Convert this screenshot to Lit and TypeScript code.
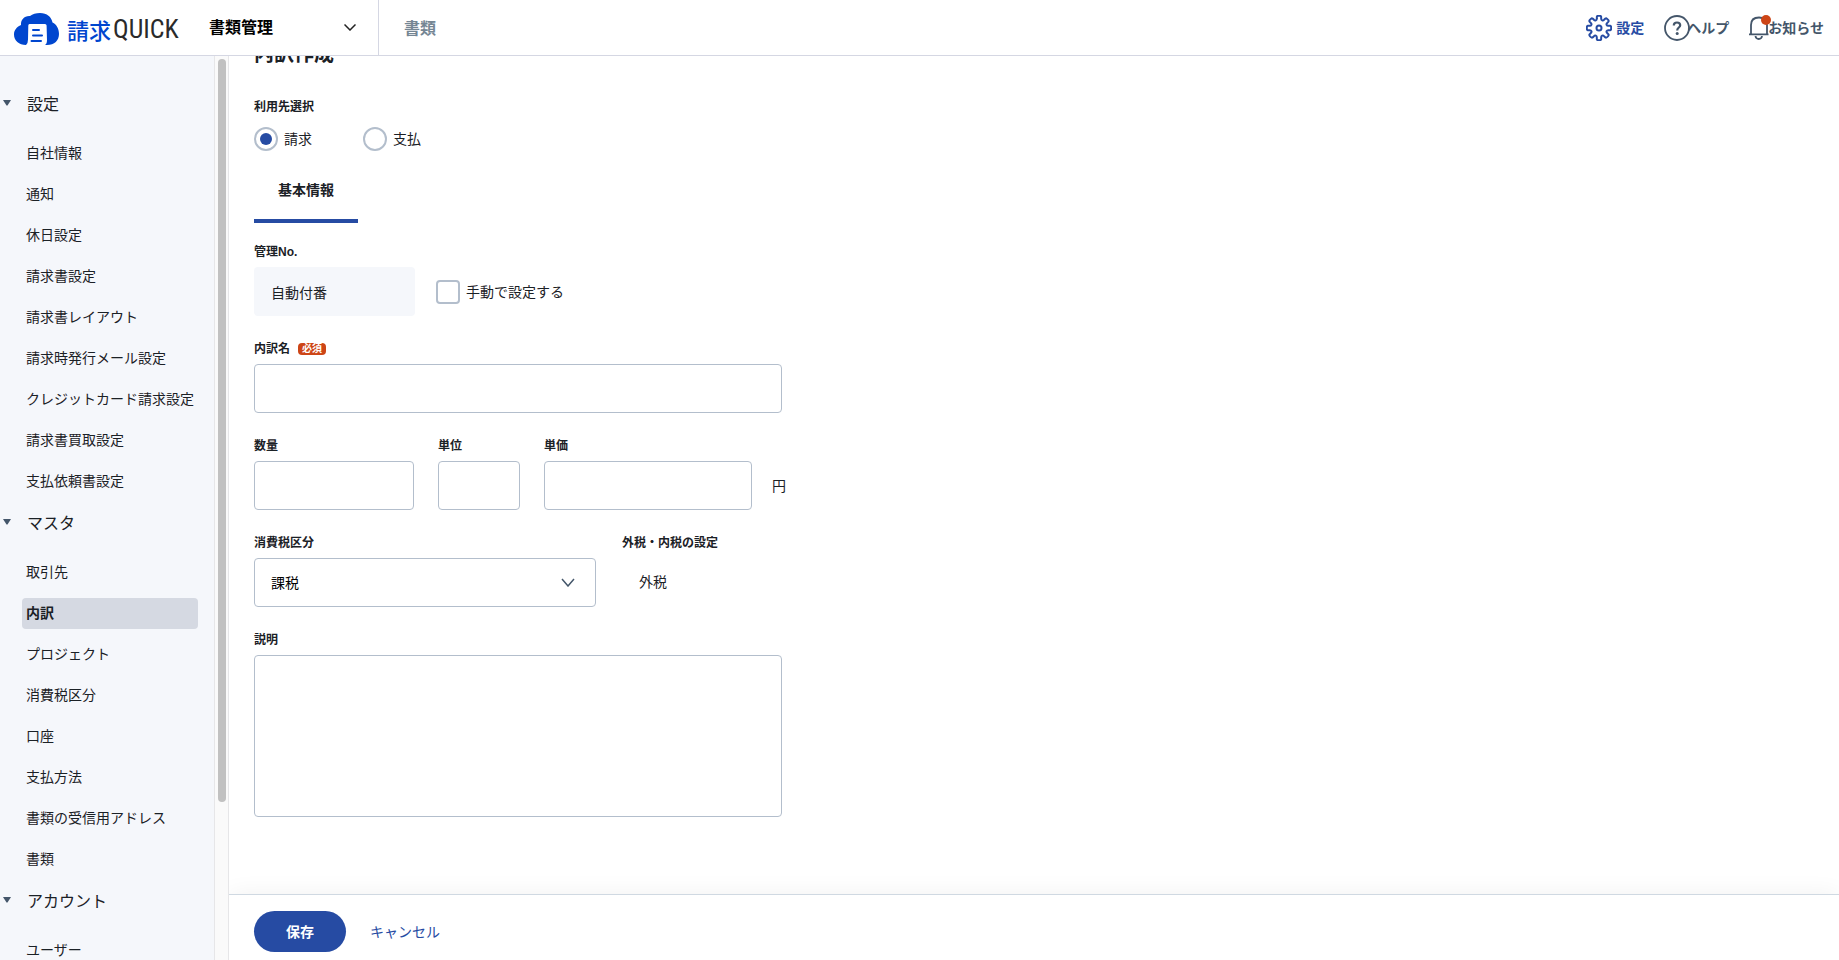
import { LitElement, html, css, svg } from "lit";
import { customElement, state } from "lit/decorators.js";

interface Section {
  title: string;
  items: string[];
}

const SECTIONS: Section[] = [
  {
    title: "設定",
    items: [
      "自社情報",
      "通知",
      "休日設定",
      "請求書設定",
      "請求書レイアウト",
      "請求時発行メール設定",
      "クレジットカード請求設定",
      "請求書買取設定",
      "支払依頼書設定",
    ],
  },
  {
    title: "マスタ",
    items: [
      "取引先",
      "内訳",
      "プロジェクト",
      "消費税区分",
      "口座",
      "支払方法",
      "書類の受信用アドレス",
      "書類",
    ],
  },
  { title: "アカウント", items: ["ユーザー"] },
];

/** Outline of an eight-toothed cog centred on (13, 13). */
function cogPath(): string {
  const pts: string[] = [];
  const step = Math.PI / 4;
  for (let i = 0; i < 8; i++) {
    const a = i * step - Math.PI / 2;
    const at = (r: number, d: number) =>
      `${(13 + r * Math.cos(a + d)).toFixed(2)} ${(13 + r * Math.sin(a + d)).toFixed(2)}`;
    pts.push(
      `${i === 0 ? "M" : "L"}${at(9.6, -0.23)}`,
      `L${at(11.4, -0.19)}`,
      `Q${at(12.3, -0.16)} ${at(12.2, -0.06)}`,
      `L${at(12.2, 0.06)}`,
      `Q${at(12.3, 0.16)} ${at(11.4, 0.19)}`,
      `L${at(9.6, 0.23)}`,
      `C${at(7.9, 0.27)} ${at(7.9, 0.515)} ${at(9.6, 0.555)}`
    );
  }
  return pts.join(" ") + "Z";
}

const logoMark = svg`
  <path fill="#0046cf" d="M12 32C5 32 0 27.500 0 21.500C0 17 3 13.500 7 12C6.500 7 10.500 2.500 16 3C18.500 1 22 0 26 0C33 0 37.500 4 38.500 9.500C42.500 11.500 45 15.500 45 21C45 27.500 40.500 32 33 32Z"/>
  <path fill="#fff" d="M15.500 11H31Q32.500 11 32.600 12.500L33 27Q33 31 31 32H12Q14 30.500 14 26.500L14.300 12.500Q14.300 11 15.500 11Z"/>
  <path stroke="#0046cf" stroke-width="2" stroke-linecap="round" d="M19 17H25M19 22.500H28M17.500 28H27"/>`;

@customElement("app-root")
export class AppRoot extends LitElement {
  @state() private target = "請求";

  static styles = css`
    :host {
      display: flex;
      flex-direction: column;
      height: 100vh;
      overflow: hidden;
      background: #fff;
      color: #1b2126;
      font-family: "Liberation Sans", "Noto Sans CJK JP", sans-serif;
      font-size: 14px;
      line-height: 20px;
    }
    * {
      box-sizing: border-box;
    }
    a {
      color: inherit;
      text-decoration: none;
    }
    button,
    input,
    select,
    textarea {
      font: inherit;
      color: inherit;
      margin: 0;
    }
    svg {
      display: block;
      fill: none;
      flex: none;
    }
    ul {
      list-style: none;
      margin: 0;
      padding: 0;
    }

    .header {
      display: flex;
      flex: none;
      height: 56px;
      border-bottom: 1px solid #d5d7e3;
      background: #fff;
      font-weight: 700;
    }
    .brand {
      display: flex;
      align-items: center;
      gap: 8px;
      padding: 2px 0 0 14px;
      width: 195px;
      font-size: 22px;
      line-height: 32px;
      font-weight: 500;
      color: #0046cf;
      white-space: nowrap;
    }
    .brand-name {
      display: flex;
      align-items: center;
      gap: 2px;
      font-family: "Noto Sans CJK JP", sans-serif;
    }
    .brand-latin {
      font-family: "Roboto Condensed", "Noto Sans CJK JP", sans-serif;
      font-size: 26px;
      font-weight: 400;
      color: #2a2a2a;
    }
    .switcher {
      display: flex;
      align-items: center;
      justify-content: space-between;
      width: 184px;
      padding: 0 22px 0 14px;
      border: 0;
      border-right: 1px solid #d5d7e3;
      background: none;
      font-size: 16px;
      color: #000;
    }
    .crumb {
      padding: 2px 25px 0;
      align-self: center;
      font-size: 16px;
      color: #758694;
    }
    .tools {
      display: flex;
      align-items: center;
      gap: 20px;
      margin-left: auto;
      padding-right: 15px;
      color: #44566a;
    }
    .tool {
      display: flex;
      align-items: center;
    }
    .tool.active {
      gap: 4px;
      color: #264ba3;
    }
    .help-icon {
      margin-right: -3px;
    }

    .body {
      display: flex;
      flex: 1;
      min-height: 0;
    }
    .sidebar {
      width: 214px;
      flex: none;
      overflow: hidden;
      background: #f5f7fb;
      padding-top: 22px;
    }
    .section-title {
      display: flex;
      align-items: center;
      gap: 16px;
      width: 100%;
      margin: 15px 0 21px;
      padding: 0 0 0 3px;
      border: 0;
      background: none;
      font-size: 16px;
      line-height: 24px;
    }
    .section-title svg {
      margin-bottom: 4px;
    }
    .menu {
      display: flex;
      flex-direction: column;
      gap: 10px;
      padding: 0 16px 0 22px;
    }
    .menu a {
      display: block;
      padding: 0 4px;
      border-radius: 4px;
      line-height: 31px;
      white-space: nowrap;
    }
    .menu a.current {
      background: #d5d9e2;
      font-weight: 700;
    }
    .track {
      width: 15px;
      flex: none;
      padding: 3px 2px 0 3px;
      border: solid #e6e6e8;
      border-width: 0 1px;
      background: #fafafa;
    }
    .thumb {
      width: 8px;
      height: 82.5%;
      border-radius: 4px;
      background: #c1c1c1;
    }

    .content {
      display: flex;
      flex-direction: column;
      flex: 1;
      min-width: 0;
    }
    .form {
      flex: 1;
      min-height: 0;
      overflow: hidden;
      padding-left: 25px;
    }
    h1 {
      margin: -14px 0 32px;
      font-size: 20px;
      line-height: 24px;
    }
    fieldset {
      border: 0;
      margin: 0;
      padding: 0;
    }
    .label {
      display: flex;
      align-items: center;
      gap: 8px;
      padding: 0;
      margin-bottom: 6px;
      font-size: 12px;
      line-height: 18px;
      font-weight: 700;
    }
    .radios {
      display: flex;
      gap: 51px;
      padding-top: 5px;
    }
    .option {
      display: flex;
      align-items: center;
      gap: 6px;
    }
    .option input {
      appearance: none;
      width: 24px;
      height: 24px;
      border: 2px solid #b3becc;
      background: #fff;
    }
    .option input[type="radio"] {
      border-radius: 50%;
    }
    .option input[type="radio"]:checked {
      padding: 4px;
      background: #264ba3 content-box;
      background-clip: content-box;
    }
    .option input[type="checkbox"] {
      border-radius: 4px;
    }
    .tab {
      display: block;
      width: 104px;
      margin: 18px 0 20px;
      padding: 11px 0 19px;
      border: 0;
      border-bottom: 4px solid #264ba3;
      background: none;
      font-weight: 700;
      text-align: center;
    }
    .row {
      display: flex;
      align-items: flex-end;
      gap: 24px;
      margin-bottom: 24px;
    }
    .box {
      display: block;
      width: 100%;
      height: 49px;
      padding: 0 16px;
      border: 1px solid #b3becc;
      border-radius: 4px;
      background: #fff;
      outline: none;
    }
    textarea.box {
      height: 162px;
      resize: none;
    }
    .box[readonly] {
      border-color: transparent;
      background: #f5f7fb;
    }
    .wide {
      width: 528px;
    }
    .number {
      width: 161px;
    }
    .quantity {
      width: 160px;
    }
    .unit {
      width: 82px;
    }
    .price {
      width: 208px;
    }
    .tax {
      width: 344px;
      padding-right: 2px;
    }
    .beside {
      display: flex;
      align-items: center;
      height: 49px;
      margin-left: -4px;
    }
    .number + .beside {
      margin-left: -3px;
    }
    .select {
      display: grid;
      align-items: center;
    }
    .select > * {
      grid-area: 1 / 1;
    }
    .select select {
      appearance: none;
      color: #000;
    }
    .select svg {
      justify-self: end;
      margin-right: 21px;
      pointer-events: none;
    }
    .value {
      padding-left: 17px;
      line-height: 49px;
    }
    .required {
      padding: 0 4px;
      border-radius: 4px;
      background: #cd4516;
      color: #fff;
      font-size: 10px;
      line-height: 12px;
    }

    .footer {
      display: flex;
      align-items: center;
      gap: 24px;
      flex: none;
      padding: 16px 25px 8px;
      border-top: 1px solid #d0d9e2;
      background: #fff;
      box-shadow: 0 0 24px rgba(0, 0, 0, 0.06);
      clip-path: inset(-40px 0 0 0);
    }
    .save {
      width: 92px;
      height: 41px;
      border: 0;
      border-radius: 21px;
      background: #264ba3;
      color: #fff;
      font-weight: 700;
    }
    .cancel {
      color: #264ba3;
    }
  `;

  private renderSection(s: Section) {
    return html`
      <button class="section-title" type="button">
        <svg width="8" height="6" viewBox="0 0 8 6"><path fill="#44566a" d="M0 0H8L4.500 5.500H3.500Z" /></svg>
        <span>${s.title}</span>
      </button>
      <ul class="menu">
        ${s.items.map(
          (i) => html`<li><a href="#" class=${i === "内訳" ? "current" : ""}>${i}</a></li>`
        )}
      </ul>
    `;
  }

  private renderRadio(name: string) {
    return html`<label class="option">
      <input type="radio" name="target" .checked=${this.target === name} @change=${() => (this.target = name)} />
      <span>${name}</span>
    </label>`;
  }

  render() {
    return html`
      <header class="header">
        <a class="brand" href="#">
          <svg width="45" height="32" viewBox="0 0 45 32">${logoMark}</svg>
          <span class="brand-name"><span>請求</span><span class="brand-latin">QUICK</span></span>
        </a>
        <button class="switcher" type="button">
          <span>書類管理</span>
          <svg width="12" height="7" viewBox="0 0 12 7"><path stroke="#222" stroke-width="1.500" d="M0.500 0.500L6 6L11.500 0.500" /></svg>
        </button>
        <a class="crumb" href="#">書類</a>
        <nav class="tools">
          <a class="tool active" href="#">
            <svg width="26" height="26" viewBox="0 0 26 26" stroke="currentColor" stroke-width="2" stroke-linejoin="round">
              <path d=${cogPath()} />
              <circle cx="13" cy="13" r="2.500" />
            </svg>
            <span>設定</span>
          </a>
          <a class="tool" href="#">
            <svg class="help-icon" width="26" height="26" viewBox="0 0 26 26" stroke="currentColor" stroke-width="1.800">
              <circle cx="13" cy="13" r="12" />
              <path stroke-width="2.200" d="M9.800 10.500C9.800 8.500 11 7.500 13 7.500C15 7.500 16.200 8.500 16.200 10.200C16.200 12.500 13.200 12.600 13.200 15.500" />
              <circle cx="13.200" cy="18.500" r="1.500" fill="currentColor" stroke="none" />
            </svg>
            <span>ヘルプ</span>
          </a>
          <a class="tool" href="#">
            <svg width="19" height="26" viewBox="0 0 19 26" overflow="visible" stroke="currentColor" stroke-width="1.800">
              <path d="M2 19V10C2 5 5 2.500 10 2.500C14.500 2.500 18 5 18 10V19M0 19.300H19.500M6.500 21C7 25 12.500 25 13 21" />
              <circle cx="17" cy="5" r="5" fill="#cd4516" stroke="none" />
            </svg>
            <span>お知らせ</span>
          </a>
        </nav>
      </header>
      <div class="body">
        <nav class="sidebar">${SECTIONS.map((s) => this.renderSection(s))}</nav>
        <div class="track"><div class="thumb"></div></div>
        <main class="content">
          <div class="form">
            <h1>内訳作成</h1>
            <fieldset>
              <legend class="label">利用先選択</legend>
              <div class="radios">${["請求", "支払"].map((n) => this.renderRadio(n))}</div>
            </fieldset>
            <button class="tab" type="button">基本情報</button>
            <div class="row">
              <div class="number">
                <label class="label" for="no">管理No.</label>
                <input class="box" id="no" readonly value="自動付番" />
              </div>
              <div class="beside">
                <label class="option"><input type="checkbox" /><span>手動で設定する</span></label>
              </div>
            </div>
            <div class="row">
              <div class="wide">
                <label class="label" for="name">内訳名<span class="required">必須</span></label>
                <input class="box" id="name" />
              </div>
            </div>
            <div class="row">
              <div class="quantity">
                <label class="label" for="qty">数量</label>
                <input class="box" id="qty" />
              </div>
              <div class="unit">
                <label class="label" for="unit">単位</label>
                <input class="box" id="unit" />
              </div>
              <div class="price">
                <label class="label" for="price">単価</label>
                <input class="box" id="price" />
              </div>
              <div class="beside">円</div>
            </div>
            <div class="row">
              <div class="tax">
                <label class="label" for="tax">消費税区分</label>
                <div class="select">
                  <select class="box" id="tax"><option>課税</option></select>
                  <svg width="14" height="9" viewBox="0 0 14 9"><path stroke="#44566a" stroke-width="1.500" d="M1 1L7 8L13 1" /></svg>
                </div>
              </div>
              <div>
                <div class="label">外税・内税の設定</div>
                <div class="value">外税</div>
              </div>
            </div>
            <div class="row">
              <div class="wide">
                <label class="label" for="memo">説明</label>
                <textarea class="box" id="memo"></textarea>
              </div>
            </div>
          </div>
          <footer class="footer">
            <button class="save" type="button">保存</button>
            <a class="cancel" href="#">キャンセル</a>
          </footer>
        </main>
      </div>
    `;
  }
}
